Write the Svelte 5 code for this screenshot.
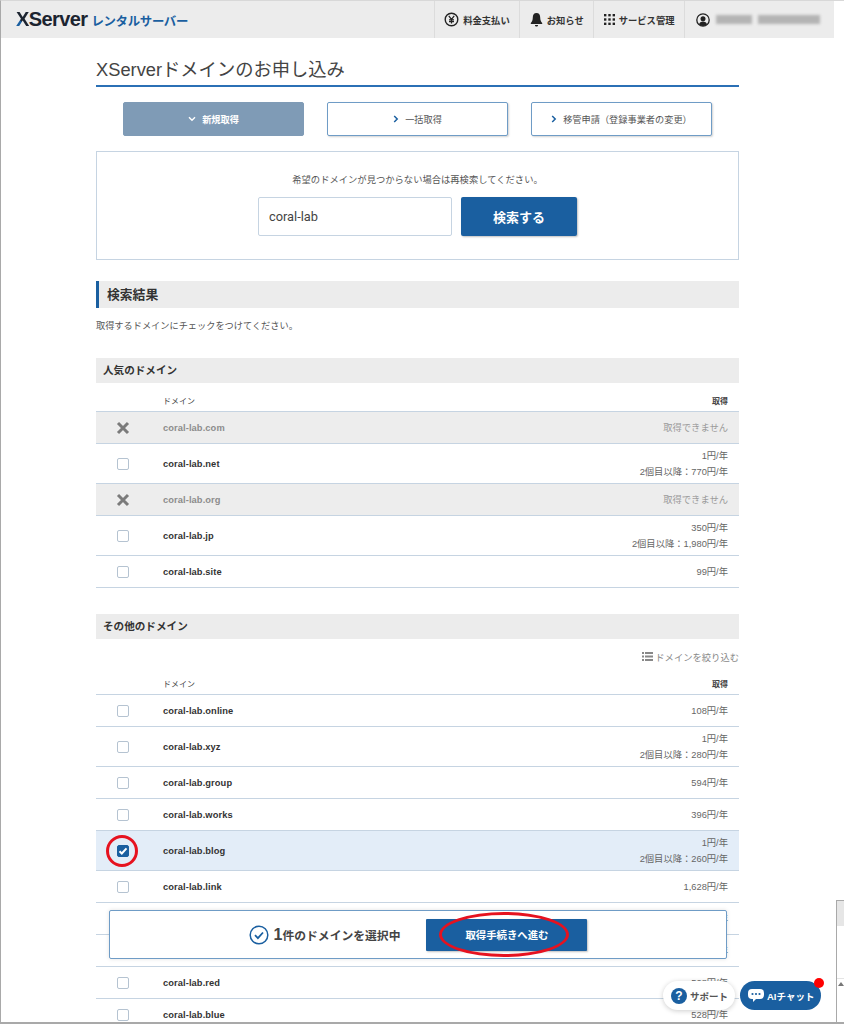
<script lang="ts">
	interface Row {
		name: string;
		price?: string;
		next?: string;
		taken?: boolean;
		checked?: boolean;
	}

	const popular: Row[] = [
		{ name: 'coral-lab.com', taken: true },
		{ name: 'coral-lab.net', price: '1円/年', next: '2個目以降：770円/年' },
		{ name: 'coral-lab.org', taken: true },
		{ name: 'coral-lab.jp', price: '350円/年', next: '2個目以降：1,980円/年' },
		{ name: 'coral-lab.site', price: '99円/年' }
	];

	const others: Row[] = [
		{ name: 'coral-lab.online', price: '108円/年' },
		{ name: 'coral-lab.xyz', price: '1円/年', next: '2個目以降：280円/年' },
		{ name: 'coral-lab.group', price: '594円/年' },
		{ name: 'coral-lab.works', price: '396円/年' },
		{ name: 'coral-lab.blog', price: '1円/年', next: '2個目以降：260円/年', checked: true },
		{ name: 'coral-lab.link', price: '1,628円/年' },
		{ name: 'coral-lab.shop', price: '528円/年' },
		{ name: 'coral-lab.tokyo', price: '528円/年' },
		{ name: 'coral-lab.red', price: '528円/年' },
		{ name: 'coral-lab.blue', price: '528円/年' }
	];
</script>

{#snippet domainTable(rows: Row[])}
	<div class="table-head">
		<span>ドメイン</span>
		<span class="head-right">取得</span>
	</div>
	{#each rows as row}
		<div class="row" class:taken={row.taken} class:checked={row.checked}>
			<div class="mark">
				{#if row.taken}
					<svg width="14" height="14" viewBox="0 0 14 14"><path d="M2 2l10 10M12 2L2 12" stroke="#7b7b7b" stroke-width="3" fill="none" /></svg>
				{:else if row.checked}
					<span class="box on">
						<svg width="10" height="10" viewBox="0 0 10 10"><path d="M1.500 5.200l2.300 2.300L8.500 2.300" stroke="#fff" stroke-width="2" fill="none" /></svg>
					</span>
				{:else}
					<span class="box"></span>
				{/if}
			</div>
			<div class="name">{row.name}</div>
			<div class="price">
				{#if row.taken}
					取得できません
				{:else}
					<div>{row.price}</div>
					{#if row.next}<div>{row.next}</div>{/if}
				{/if}
			</div>
		</div>
	{/each}
{/snippet}

<div class="frame">
	<header>
		<div class="logo"><span class="x-name"><span class="x-letter">X</span>Server</span><span class="x-sub">レンタルサーバー</span></div>
		<nav>
			<div class="nav-item">
				<svg width="15" height="15" viewBox="0 0 15 15"><circle cx="7.500" cy="7.500" r="6.300" fill="none" stroke="#222" stroke-width="1.400" /><path d="M4.800 3.800l2.700 3.600 2.700-3.600M7.500 7.400v4M5 7.800h5M5 9.600h5" stroke="#222" stroke-width="1.200" fill="none" /></svg>
				料金支払い
			</div>
			<div class="nav-item">
				<svg width="13" height="15" viewBox="0 0 13 15"><path d="M6.500 1c-2.600 0-3.700 2-3.700 4.400 0 2.700-.8 4.200-2 5.600v1h11.400v-1c-1.200-1.400-2-2.900-2-5.600C10.200 3 9.100 1 6.500 1z" fill="#222" /><path d="M5 13h3v.6c0 .5-.7 1-1.500 1S5 14.100 5 13.600z" fill="#222" /></svg>
				お知らせ
			</div>
			<div class="nav-item">
				<svg width="11" height="11" viewBox="0 0 12 12" fill="#222"><rect x="0" y="0" width="2.600" height="2.600" /><rect x="4.700" y="0" width="2.600" height="2.600" /><rect x="9.400" y="0" width="2.600" height="2.600" /><rect x="0" y="4.700" width="2.600" height="2.600" /><rect x="4.700" y="4.700" width="2.600" height="2.600" /><rect x="9.400" y="4.700" width="2.600" height="2.600" /><rect x="0" y="9.400" width="2.600" height="2.600" /><rect x="4.700" y="9.400" width="2.600" height="2.600" /><rect x="9.400" y="9.400" width="2.600" height="2.600" /></svg>
				サービス管理
			</div>
			<div class="nav-item user">
				<svg width="14" height="14" viewBox="0 0 14 14"><circle cx="7" cy="7" r="6.200" fill="none" stroke="#222" stroke-width="1.300" /><circle cx="7" cy="5.700" r="2.500" fill="#222" /><path d="M3 11.500c.5-2.200 2-3 4-3s3.500.8 4 3a6 6 0 0 1-8 0z" fill="#222" /></svg>
				<span class="blur-name"></span><span class="blur-name long"></span>
			</div>
		</nav>
	</header>

	<main>
		<h1>XServerドメインのお申し込み</h1>

		<div class="tabs">
			<div class="tab active">
				<svg width="8" height="6" viewBox="0 0 8 6"><path d="M1 1.200l3 3 3-3" stroke="#fff" stroke-width="1.400" fill="none" /></svg>
				新規取得
			</div>
			<div class="tab">
				<svg width="6" height="8" viewBox="0 0 6 8"><path d="M1.200 1l3 3-3 3" stroke="#1a5fa0" stroke-width="1.500" fill="none" /></svg>
				一括取得
			</div>
			<div class="tab">
				<svg width="6" height="8" viewBox="0 0 6 8"><path d="M1.200 1l3 3-3 3" stroke="#1a5fa0" stroke-width="1.500" fill="none" /></svg>
				移管申請（登録事業者の変更）
			</div>
		</div>

		<section class="search">
			<p>希望のドメインが見つからない場合は再検索してください。</p>
			<div class="search-row">
				<input type="text" value="coral-lab" />
				<button>検索する</button>
			</div>
		</section>

		<h2>検索結果</h2>
		<p class="lead">取得するドメインにチェックをつけてください。</p>

		<h3>人気のドメイン</h3>
		{@render domainTable(popular)}

		<h3 class="second">その他のドメイン</h3>
		<div class="filter">
			<svg width="11" height="9" viewBox="0 0 11 9" fill="#888"><rect x="0" y="0" width="2" height="2" /><rect x="3" y="0" width="8" height="2" /><rect x="0" y="3.500" width="2" height="2" /><rect x="3" y="3.500" width="8" height="2" /><rect x="0" y="7" width="2" height="2" /><rect x="3" y="7" width="8" height="2" /></svg>
			ドメインを絞り込む
		</div>
		{@render domainTable(others)}
	</main>

	<div class="select-bar">
		<svg width="20" height="20" viewBox="0 0 20 20"><circle cx="10" cy="10" r="8.800" fill="none" stroke="#1a5fa0" stroke-width="1.500" /><path d="M6 10.200l2.900 2.900L14 7.500" stroke="#1a5fa0" stroke-width="1.800" fill="none" /></svg>
		<span class="count"><b>1</b>件のドメインを選択中</span>
		<button>取得手続きへ進む</button>
	</div>

	<!-- red annotations drawn on the screenshot -->
	<div class="ring ring-check"></div>
	<div class="ring ring-next"></div>

	<div class="support">
		<span class="q">?</span>
		サポート
	</div>
	<div class="chat">
		<svg width="16" height="13" viewBox="0 0 16 13"><path d="M4 0h8a4 4 0 0 1 4 4v2a4 4 0 0 1-4 4H8l-3 3v-3H4a4 4 0 0 1-4-4V4a4 4 0 0 1 4-4z" fill="#fff" /><circle cx="4.500" cy="5" r="1.100" fill="#1a5fa0" /><circle cx="8" cy="5" r="1.100" fill="#1a5fa0" /><circle cx="11.500" cy="5" r="1.100" fill="#1a5fa0" /></svg>
		AIチャット
		<span class="dot"></span>
	</div>

	<div class="scrollbar">
		<div class="thumb"></div>
		<div class="scroll-up"><span class="arrow"></span></div>
	</div>
</div>

<style>
	:global(body) {
		margin: 0;
		background: #fff;
	}

	.frame {
		position: relative;
		width: 844px;
		height: 1024px;
		box-sizing: border-box;
		overflow: hidden;
		background: #fff;
		border-left: 1px solid #a9a9a9;
		border-top: 1px solid #d8d8d8;
		border-bottom: 2px solid #a9a9a9;
		font-family: 'Liberation Sans', Roboto, 'Noto Sans CJK JP', sans-serif;
		color: #333;
	}

	header {
		display: flex;
		justify-content: space-between;
		align-items: center;
		width: 833px;
		height: 37px;
		background: #ececec;
	}

	.logo {
		display: flex;
		align-items: baseline;
		padding-left: 15px;
	}

	.x-name {
		font-size: 20px;
		font-weight: 700;
		letter-spacing: -0.6px;
		color: #1c2430;
	}

	.x-letter {
		background: linear-gradient(45deg, #1a5fa0 38%, #1c2430 42%);
		background-clip: text;
		-webkit-background-clip: text;
		color: transparent;
	}

	.x-sub {
		margin-left: 4px;
		font-size: 12.400px;
		font-weight: 700;
		letter-spacing: -0.3px;
		color: #1a5fa0;
	}

	nav {
		display: flex;
		height: 100%;
	}

	.nav-item {
		display: flex;
		align-items: center;
		gap: 4px;
		padding: 0 9.500px;
		border-left: 1px solid #dcdcdc;
		font-size: 9.300px;
		font-weight: 700;
		color: #333;
	}

	.nav-item.user {
		padding: 0 14px 0 11px;
		gap: 4px;
	}

	.blur-name {
		width: 36px;
		height: 9px;
		background: #b4b4b4;
		filter: blur(1.500px);
		margin-left: 2px;
	}

	.blur-name.long {
		width: 62px;
	}

	main {
		width: 643px;
		margin-left: 95px;
	}

	h1 {
		margin: 0;
		height: 49px;
		box-sizing: border-box;
		padding-top: 21px;
		border-bottom: 2px solid #2b70b5;
		font-size: 18.300px;
		line-height: 22px;
		font-weight: 400;
		color: #444;
	}

	.tabs {
		display: flex;
		justify-content: center;
		gap: 23px;
		margin-top: 15px;
	}

	.tab {
		display: flex;
		justify-content: center;
		align-items: center;
		gap: 6px;
		width: 181px;
		height: 34px;
		box-sizing: border-box;
		border: 1px solid #6f9cc6;
		border-radius: 2px;
		box-shadow: 1px 1px 2px rgba(0, 0, 0, 0.18);
		font-size: 9.200px;
		color: #555;
		background: #fff;
	}

	.tab.active {
		background: #7f9bb6;
		border-color: #7f9bb6;
		color: #fff;
		font-weight: 700;
		box-shadow: none;
	}

	.search {
		margin-top: 15px;
		height: 109px;
		box-sizing: border-box;
		border: 1px solid #c6d4e2;
		padding-top: 22px;
		text-align: center;
	}

	.search p {
		margin: 0;
		font-size: 9.300px;
		line-height: 12px;
		color: #555;
	}

	.search-row {
		display: flex;
		justify-content: center;
		gap: 9px;
		margin-top: 11px;
	}

	.search-row input {
		width: 194px;
		height: 39px;
		box-sizing: border-box;
		padding: 0 10px;
		border: 1px solid #c6d4e2;
		border-radius: 2px;
		font-family: Roboto, 'Liberation Sans', sans-serif;
		font-size: 12.800px;
		color: #444;
	}

	.search-row button {
		width: 116px;
		height: 39px;
		border: none;
		border-radius: 2px;
		background: #1a5fa0;
		box-shadow: 1px 1px 2px rgba(0, 0, 0, 0.25);
		font-family: inherit;
		font-size: 13px;
		font-weight: 700;
		color: #fff;
	}

	h2 {
		margin: 21px 0 0;
		height: 27px;
		box-sizing: border-box;
		padding-left: 8px;
		border-left: 3px solid #1a5fa0;
		background: #ececec;
		font-size: 12.800px;
		line-height: 27px;
		font-weight: 700;
		color: #333;
	}

	.lead {
		margin: 12px 0 0;
		font-size: 9.200px;
		line-height: 12px;
		color: #555;
	}

	h3 {
		margin: 26px 0 0;
		height: 25px;
		padding-left: 7px;
		background: #ececec;
		font-size: 10.600px;
		line-height: 25px;
		font-weight: 700;
		color: #333;
	}

	.filter {
		display: flex;
		justify-content: flex-end;
		align-items: center;
		gap: 2px;
		margin-top: 11px;
		height: 13px;
		font-size: 9.300px;
		color: #888;
	}

	.table-head {
		display: flex;
		justify-content: space-between;
		height: 29px;
		box-sizing: border-box;
		padding: 13px 11px 0 67px;
		border-bottom: 1px solid #c6d4e2;
		font-size: 8px;
		line-height: 12px;
		font-weight: 400;
		color: #444;
	}

	.filter + .table-head {
		height: 32px;
		padding-top: 16px;
	}

	.head-right {
		font-weight: 700;
	}

	.row {
		display: flex;
		align-items: center;
		min-height: 31px;
		border-bottom: 1px solid #c6d4e2;
	}

	.row.taken {
		background: #ededed;
		color: #8c8c8c;
	}

	.row.checked {
		background: #e3edf8;
	}

	.mark {
		display: flex;
		justify-content: center;
		align-items: center;
		width: 53px;
		margin-right: 14px;
		flex: none;
	}

	.box {
		display: flex;
		justify-content: center;
		align-items: center;
		width: 12px;
		height: 12px;
		box-sizing: border-box;
		border: 1px solid #b5c3d1;
		border-radius: 2px;
		background: #fff;
	}

	.box.on {
		background: #1a5fa0;
		border-color: #1a5fa0;
	}

	.name {
		flex: 1;
		font-size: 9.300px;
		font-weight: 700;
		letter-spacing: 0.1px;
	}

	.taken .name {
		color: #8c8c8c;
	}

	.price {
		padding: 5px 11px 3px 0;
		text-align: right;
		font-size: 9.300px;
		line-height: 15.500px;
		color: #666;
	}

	.taken .price {
		color: #9a9a9a;
	}

	.select-bar {
		position: absolute;
		left: 108px;
		top: 909px;
		width: 618px;
		height: 49px;
		box-sizing: border-box;
		display: flex;
		justify-content: center;
		align-items: center;
		border: 1px solid #6f9cc6;
		border-radius: 2px;
		background: #fff;
		box-shadow: 0 0 4px rgba(0, 0, 0, 0.12);
	}

	.count {
		margin-left: 5px;
		font-size: 11.800px;
		font-weight: 700;
		color: #444;
	}

	.count b {
		font-size: 16px;
	}

	.select-bar button {
		width: 161px;
		height: 32px;
		margin-left: 26px;
		border: none;
		border-radius: 1px;
		background: #1a5fa0;
		box-shadow: 1px 1px 2px rgba(0, 0, 0, 0.25);
		font-family: inherit;
		font-size: 10.400px;
		font-weight: 700;
		color: #fff;
	}

	.ring {
		position: absolute;
		box-sizing: border-box;
		border: 3px solid #e6121f;
		border-radius: 50%;
	}

	.ring-check {
		left: 105px;
		top: 834px;
		width: 32px;
		height: 32px;
	}

	.ring-next {
		left: 438px;
		top: 911px;
		width: 130px;
		height: 45px;
	}

	.support,
	.chat {
		position: absolute;
		display: flex;
		align-items: center;
		height: 29px;
		box-sizing: border-box;
		border-radius: 15px;
		font-size: 9.500px;
		font-weight: 700;
	}

	.support {
		left: 662px;
		top: 980px;
		width: 72px;
		gap: 3px;
		padding-left: 8px;
		background: #fff;
		box-shadow: 0 1px 5px rgba(0, 0, 0, 0.2);
		color: #555;
	}

	.q {
		display: flex;
		justify-content: center;
		align-items: center;
		width: 16px;
		height: 16px;
		border-radius: 50%;
		background: #1a5fa0;
		color: #fff;
		font-size: 12px;
	}

	.chat {
		left: 739px;
		top: 980px;
		width: 81px;
		gap: 3px;
		padding-left: 8px;
		background: #1a5fa0;
		color: #fff;
	}

	.dot {
		position: absolute;
		right: -3px;
		top: -3px;
		width: 10px;
		height: 10px;
		border-radius: 50%;
		background: #f00;
	}

	.scrollbar {
		position: absolute;
		left: 835px;
		top: 899px;
		bottom: 0;
		width: 8px;
		box-sizing: border-box;
		border-left: 1px solid #a9a9a9;
		border-top: 1px solid #a9a9a9;
		background: #fff;
	}

	.thumb {
		height: 25px;
		background: #e6e6e6;
	}

	.scroll-up {
		margin-top: 52px;
		padding-top: 3px;
		border-top: 1px solid #e4e4e4;
	}

	.arrow {
		display: block;
		width: 0;
		margin: 0 auto;
		border: 3px solid transparent;
		border-bottom: 4px solid #777;
		border-top: none;
	}
</style>
